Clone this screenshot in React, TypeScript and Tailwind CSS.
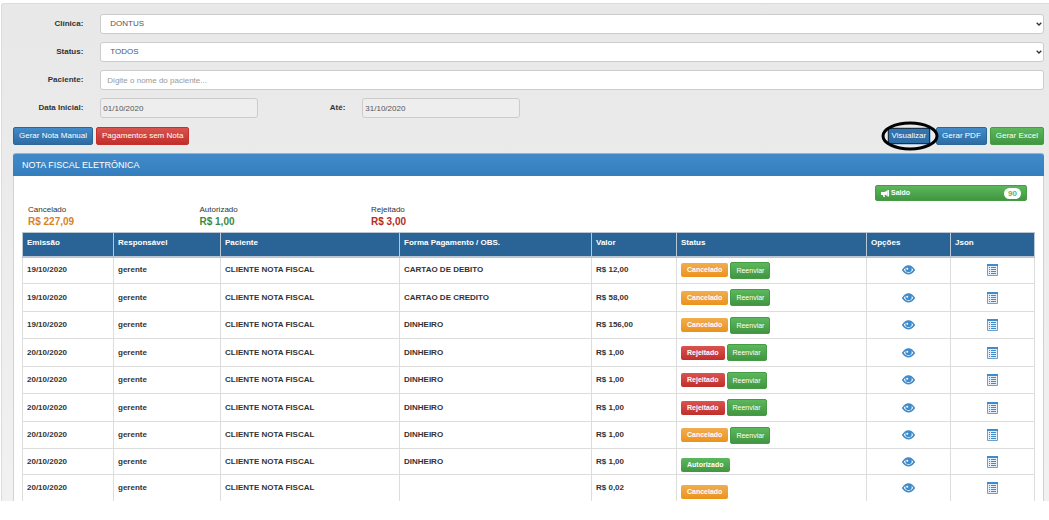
import type { ReactNode } from 'react'

type NotaStatus = 'Cancelado' | 'Rejeitado' | 'Autorizado'

interface Nota {
  emissao: string
  forma: string
  valor: string
  status: NotaStatus
  reenviar: boolean
}

const NOTAS: Nota[] = [
  { emissao: '19/10/2020', forma: 'CARTAO DE DEBITO', valor: 'R$ 12,00', status: 'Cancelado', reenviar: true },
  { emissao: '19/10/2020', forma: 'CARTAO DE CREDITO', valor: 'R$ 58,00', status: 'Cancelado', reenviar: true },
  { emissao: '19/10/2020', forma: 'DINHEIRO', valor: 'R$ 156,00', status: 'Cancelado', reenviar: true },
  { emissao: '20/10/2020', forma: 'DINHEIRO', valor: 'R$ 1,00', status: 'Rejeitado', reenviar: true },
  { emissao: '20/10/2020', forma: 'DINHEIRO', valor: 'R$ 1,00', status: 'Rejeitado', reenviar: true },
  { emissao: '20/10/2020', forma: 'DINHEIRO', valor: 'R$ 1,00', status: 'Rejeitado', reenviar: true },
  { emissao: '20/10/2020', forma: 'DINHEIRO', valor: 'R$ 1,00', status: 'Cancelado', reenviar: true },
  { emissao: '20/10/2020', forma: 'DINHEIRO', valor: 'R$ 1,00', status: 'Autorizado', reenviar: false },
  { emissao: '20/10/2020', forma: '', valor: 'R$ 0,02', status: 'Cancelado', reenviar: false },
]

const COLUMNS = [
  { title: 'Emissão', width: 'w-[91px]' },
  { title: 'Responsável', width: 'w-[107px]' },
  { title: 'Paciente', width: 'w-[179px]' },
  { title: 'Forma Pagamento / OBS.', width: 'w-[192px]' },
  { title: 'Valor', width: 'w-[85px]' },
  { title: 'Status', width: 'w-[190px]' },
  { title: 'Opções', width: 'w-[84px]' },
  { title: 'Json', width: 'w-[84px]' },
]

const TOTALS = [
  { label: 'Cancelado', value: 'R$ 227,09', color: 'text-[#d9831f]' },
  { label: 'Autorizado', value: 'R$ 1,00', color: 'text-[#3c8a3f]' },
  { label: 'Rejeitado', value: 'R$ 3,00', color: 'text-[#b52b27]' },
]

const BLUE = 'border-[#2b669a] from-[#428bca] to-[#2d6ca2]'
const RED = 'border-[#c9302c] from-[#d9534f] to-[#c12e2a]'
const GREEN = 'border-[#459c45] from-[#5cb85c] to-[#419641]'

const STATUS_COLORS: Record<NotaStatus, string> = {
  Cancelado: 'from-[#f0ad4e] to-[#eb9316]',
  Rejeitado: 'from-[#d9534f] to-[#c12e2a]',
  Autorizado: 'from-[#5cb85c] to-[#419641]',
}

const FIELD = 'h-5 rounded-[3px] border border-[#ccc] text-[8px] text-[#555]'

function Button({ color, children }: { color: string; children: ReactNode }) {
  return (
    <button type="button" className={`h-[18px] rounded-[2px] border bg-linear-to-b px-[5px] text-[8px] leading-4 text-white ${color}`}>
      {children}
    </button>
  )
}

function Label({ htmlFor, children }: { htmlFor: string; children: ReactNode }) {
  return (
    <label htmlFor={htmlFor} className="text-right text-[8px] font-bold text-[#333]">
      {children}
    </label>
  )
}

function SelectField({ id, option }: { id: string; option: string }) {
  return (
    <div className="relative col-span-11">
      <select id={id} className={`block w-full appearance-none bg-white px-[9px] ${FIELD}`}>
        <option>{option}</option>
      </select>
      <svg className="pointer-events-none absolute top-2 right-[2px] h-1 w-[6px]" viewBox="0 0 6 4" fill="none" stroke="#333" strokeWidth="1.3">
        <path d="M.7.7 3 3 5.3.7" />
      </svg>
    </div>
  )
}

function EyeIcon() {
  return (
    <svg className="h-[10px] w-[13px]" viewBox="0 0 26 20">
      <path d="M1.5 10C5 4.500 9 2 13 2s8 2.500 11.500 8C21 15 17 17.500 13 17.500S5 15 1.500 10Z" fill="#fff" stroke="#428bca" strokeWidth="3" />
      <circle cx="13" cy="8" r="6.500" fill="#428bca" />
      <circle cx="10.500" cy="7.500" r="2" fill="#fff" />
    </svg>
  )
}

function ListIcon() {
  return (
    <svg className="h-3 w-[11px]" viewBox="0 0 11 12">
      <path d="M.5.5h10v11H.5Z" fill="#e4effa" stroke="#6ba0d5" />
      <path d="M0 0h11v2H0Z" fill="#428bca" />
      <path d="M2 3.500h1M2 5.500h1M2 7.500h1M2 9.500h1M4 3.500h5M4 5.500h5M4 7.500h5M4 9.500h5" stroke="#428bca" strokeWidth="1.200" />
    </svg>
  )
}

function BullhornIcon() {
  return (
    <svg className="h-[7px] w-2" viewBox="0 0 16 14" fill="#fff">
      <path d="M0 4h3v6H0ZM3 4C7 4 10 3 12.500 1v11C10.500 10 8.500 9.500 7 9.500L8 14H5L4 10H3ZM13 0h3v13h-3Z" />
    </svg>
  )
}

function StatusCell({ nota }: { nota: Nota }) {
  return (
    <div className="flex items-center gap-[2px]">
      <span className={`h-[14px] rounded-[2px] bg-linear-to-b px-[6px] text-[7px] leading-[14px] text-white ${STATUS_COLORS[nota.status]}`}>
        {nota.status}
      </span>
      {nota.reenviar ? (
        <button type="button" className={`h-[17px] rounded-[2px] border bg-linear-to-b px-[5px] text-[7px] leading-[15px] font-normal text-white ${GREEN}`}>
          Reenviar
        </button>
      ) : null}
    </div>
  )
}

export default function App() {
  return (
    <main className="bg-white pt-[3px] pl-px font-['Liberation_Sans',Arial,sans-serif] text-[#333]">
      <div className="rounded-tl-[3px] border-t border-l border-[#dcdcdc] bg-linear-to-b from-[#e8e8e8] to-[#f1f1f1] pt-[10px] pr-[5px] pl-[11px]">
        <form className="grid grid-cols-12 items-center gap-x-[17px] gap-y-2">
          <Label htmlFor="clinica">Clínica:</Label>
          <SelectField id="clinica" option="DONTUS" />

          <Label htmlFor="status">Status:</Label>
          <SelectField id="status" option="TODOS" />

          <Label htmlFor="paciente">Paciente:</Label>
          <input id="paciente" type="text" placeholder="Digite o nome do paciente..." className={`col-span-11 bg-white px-[6px] placeholder:text-[#999] ${FIELD}`} />

          <Label htmlFor="inicio">Data Inicial:</Label>
          <input id="inicio" type="text" readOnly value="01/10/2020" className={`col-span-2 bg-[#eee] px-[2px] ${FIELD}`} />
          <Label htmlFor="fim">Até:</Label>
          <input id="fim" type="text" readOnly value="31/10/2020" className={`col-span-2 bg-[#eee] px-[2px] ${FIELD}`} />
        </form>

        <div className="mt-[9px] flex gap-[3px]">
          <Button color={BLUE}>Gerar Nota Manual</Button>
          <Button color={RED}>Pagamentos sem Nota</Button>
          <div className="relative mr-[2px] ml-auto flex">
            <button type="button" className="h-[18px] border border-[#a9c3dc] bg-linear-to-b from-[#3276b1] to-[#2d6ca2] px-1 text-[8px] leading-4 text-white outline-1 -outline-offset-2 outline-[#17324a]">
              Visualizar
            </button>
            {/* highlight ring around the button */}
            <svg className="pointer-events-none absolute -top-[6px] -left-[6px] h-[30px] w-[58px]" viewBox="0 0 58 30" fill="none" stroke="#000" strokeWidth="3">
              <ellipse cx="29" cy="15" rx="27" ry="13" />
            </svg>
          </div>
          <Button color={BLUE}>Gerar PDF</Button>
          <Button color={GREEN}>Gerar Excel</Button>
        </div>

        <section className="mt-2 rounded-t-[3px] border-x border-[#c5d5e6] bg-white">
          <h1 className="-mx-px h-[23px] rounded-t-[3px] border-t border-[#8fb4d6] bg-linear-to-b from-[#428bca] to-[#357ebd] px-[9px] text-[9px] leading-[22px] text-white">
            NOTA FISCAL ELETRÔNICA
          </h1>

          <div className="flex justify-end pt-[9px] pr-4">
            <button type="button" className={`flex h-4 w-[152px] items-center gap-[2px] rounded-[2px] border bg-linear-to-b px-[5px] text-[7px] font-bold text-white ${GREEN}`}>
              <BullhornIcon />
              Saldo
              <span className="ml-auto rounded-full bg-white px-1 text-[8px] leading-[11px] text-[#5cb85c]">90</span>
            </button>
          </div>

          <dl className="grid grid-cols-6 pt-[3px]">
            {TOTALS.map((total) => (
              <div key={total.label} className="pl-[14px]">
                <dt className="text-[8px] leading-[11px]">{total.label}</dt>
                <dd className={`text-[10px] leading-[14px] font-bold ${total.color}`}>{total.value}</dd>
              </div>
            ))}
          </dl>

          <div className="px-2 pt-[3px]">
            <table className="w-full table-fixed border-collapse text-left text-[8px] font-bold">
              <thead>
                <tr className="h-6 bg-[#2a6496] text-white">
                  {COLUMNS.map((column) => (
                    <th key={column.title} className={`border border-b-2 border-[#b9c6d3] px-1 pt-1 align-top leading-[11px] ${column.width}`}>
                      {column.title}
                    </th>
                  ))}
                </tr>
              </thead>
              <tbody>
                {NOTAS.map((nota, index) => (
                  <tr
                    key={index}
                    className={`*:border *:border-[#ddd] *:px-1 last:*:border-b-0 ${nota.reenviar ? 'odd:h-[27px] even:h-[28px]' : 'h-[26px]'}`}
                  >
                    <td>{nota.emissao}</td>
                    <td>gerente</td>
                    <td>CLIENTE NOTA FISCAL</td>
                    <td>{nota.forma}</td>
                    <td>{nota.valor}</td>
                    <td className={nota.reenviar ? '' : 'pb-[2px] align-bottom'}>
                      <StatusCell nota={nota} />
                    </td>
                    <td>
                      <button type="button" aria-label="Visualizar nota" className="mx-auto block">
                        <EyeIcon />
                      </button>
                    </td>
                    <td>
                      <button type="button" aria-label="Ver Json" className="mx-auto block">
                        <ListIcon />
                      </button>
                    </td>
                  </tr>
                ))}
              </tbody>
            </table>
          </div>
        </section>
      </div>
    </main>
  )
}
